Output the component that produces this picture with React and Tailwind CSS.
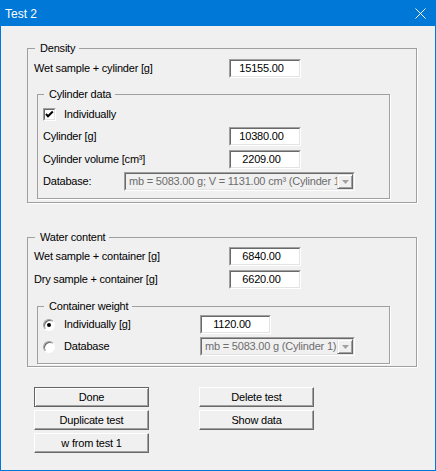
const Field = ({ value, w }) => (
  <div className={`${w} h-[19px] border border-t-[#a0a0a0] border-l-[#a0a0a0] border-b-white border-r-white`}>
    <div className="h-full bg-white border border-t-[#696969] border-l-[#696969] border-b-[#e3e3e3] border-r-[#e3e3e3] flex items-center justify-center pr-[7px]">
      {value}
    </div>
  </div>
);

const Combo = ({ text, w }) => (
  <div className={`${w} h-[19px] border border-t-[#a0a0a0] border-l-[#a0a0a0] border-b-white border-r-white`}>
    <div className="h-full flex bg-[#f0f0f0] border border-t-[#696969] border-l-[#696969] border-b-[#e3e3e3] border-r-[#e3e3e3]">
      <div className="flex-1 min-w-0 overflow-hidden whitespace-nowrap text-[#6d6d6d] pl-[3px] flex items-center">
        {text}
      </div>
      <div className="w-[16px] h-full flex items-center justify-center bg-[#f0f0f0] border border-t-[#e3e3e3] border-l-[#e3e3e3] border-b-[#696969] border-r-[#696969] shadow-[inset_1px_1px_#fff,inset_-1px_-1px_#a0a0a0]">
        <svg width="7" height="4" viewBox="0 0 7 4">
          <path d="M0 0h7L3.5 4z" fill="#a0a0a0" />
        </svg>
      </div>
    </div>
  </div>
);

const Btn = ({ children, def }) => (
  <div
    className={`h-[20px] flex items-center justify-center bg-[#f0f0f0] ${
      def
        ? 'border border-[#646464] shadow-[inset_1px_1px_#fff,inset_-1px_-1px_#a0a0a0]'
        : 'border border-t-white border-l-white border-b-[#696969] border-r-[#696969] shadow-[inset_-1px_-1px_#a0a0a0]'
    }`}
  >
    {children}
  </div>
);

const Legend = ({ children }) => (
  <legend className="ml-px pl-[5px] pr-[4px] leading-[14px]">{children}</legend>
);

const Row = ({ label, children, lw }) => (
  <div className="flex items-center h-[19px]">
    <div className={`${lw} shrink-0`}>{label}</div>
    {children}
  </div>
);

const Check = () => (
  <div className="w-[13px] h-[13px] border border-t-[#a0a0a0] border-l-[#a0a0a0] border-b-white border-r-white">
    <div className="w-full h-full bg-white border border-t-[#696969] border-l-[#696969] border-b-[#e3e3e3] border-r-[#e3e3e3] flex items-center justify-center">
      <svg width="9" height="9" viewBox="0 0 9 9">
        <path d="M1 4l2 2.2L7.8 1.5" stroke="#000" strokeWidth="2" fill="none" />
      </svg>
    </div>
  </div>
);

const Radio = ({ on }) => (
  <div className="w-[12px] h-[12px] rounded-full bg-white border border-t-[#a0a0a0] border-l-[#a0a0a0] border-b-white border-r-white shadow-[inset_1px_1px_#696969] flex items-center justify-center">
    {on && <div className="w-[4px] h-[4px] rounded-full bg-black" />}
  </div>
);

export default function App() {
  return (
    <div className="w-[436px] h-[471px] border border-[#0078d7] bg-[#f0f0f0] flex flex-col font-['Liberation_Sans',Arial,sans-serif] text-[11px] tracking-[-0.2px] text-black">
      <div className="h-[25px] shrink-0 bg-[#0078d7] flex items-center justify-between pl-[4px] pr-[9px]">
        <span className="text-white text-[12px] tracking-normal">Test 2</span>
        <svg width="11" height="11" viewBox="0 0 11 11">
          <path d="M0.5 0.5l10 10M10.5 0.5l-10 10" stroke="#fff" strokeWidth="1" />
        </svg>
      </div>

      <div className="flex-1 px-[26px] pt-[15px]">
        {/* Density */}
        <fieldset className="w-[390px] border border-[#a0a0a0] shadow-[1px_1px_0_#fff] px-[6px] pt-[4px] pb-[3px]">
          <Legend>Density</Legend>
          <Row label="Wet sample + cylinder [g]" lw="w-[195px]">
            <Field value="15155.00" w="w-[72px]" />
          </Row>

          <fieldset className="w-[353px] ml-[3px] mt-[9px] border border-[#a0a0a0] shadow-[1px_1px_0_#fff] pl-[5px] pt-[4px] pb-[7px]">
            <Legend>Cylinder data</Legend>
            <div className="flex items-center h-[19px] gap-[8px]">
              <Check />
              <span>Individually</span>
            </div>
            <div className="mt-[3px]">
              <Row label="Cylinder [g]" lw="w-[186px]">
                <Field value="10380.00" w="w-[72px]" />
              </Row>
            </div>
            <div className="mt-[4px]">
              <Row label="Cylinder volume [cm³]" lw="w-[186px]">
                <Field value="2209.00" w="w-[72px]" />
              </Row>
            </div>
            <div className="mt-[3px]">
              <Row label="Database:" lw="w-[81px]">
                <Combo text="mb = 5083.00 g; V = 1131.00 cm³ (Cylinder 1)" w="w-[231px]" />
              </Row>
            </div>
          </fieldset>
        </fieldset>

        {/* Water content */}
        <fieldset className="w-[390px] mt-[27px] border border-[#a0a0a0] shadow-[1px_1px_0_#fff] px-[6px] pt-[3px] pb-[2px]">
          <Legend>Water content</Legend>
          <Row label="Wet sample + container [g]" lw="w-[195px]">
            <Field value="6840.00" w="w-[72px]" />
          </Row>
          <div className="mt-[4px]">
            <Row label="Dry sample + container [g]" lw="w-[195px]">
              <Field value="6620.00" w="w-[72px]" />
            </Row>
          </div>

          <fieldset className="w-[353px] ml-[3px] mt-[10px] border border-[#a0a0a0] shadow-[1px_1px_0_#fff] pl-[5px] pt-[2px] pb-[7px]">
            <Legend>Container weight</Legend>
            <div className="flex items-center h-[19px]">
              <div className="w-[157px] shrink-0 flex items-center gap-[8px]">
                <Radio on />
                <span className="pl-px">Individually [g]</span>
              </div>
              <Field value="1120.00" w="w-[71px]" />
            </div>
            <div className="flex items-center h-[19px] mt-[3px]">
              <div className="w-[157px] shrink-0 flex items-center gap-[8px]">
                <Radio />
                <span className="pl-px">Database</span>
              </div>
              <Combo text="mb = 5083.00 g (Cylinder 1)" w="w-[155px]" />
            </div>
          </fieldset>
        </fieldset>

        {/* Buttons */}
        <div className="mt-[20px] ml-[7px] grid grid-cols-[115px_115px] gap-x-[50px] gap-y-[3px]">
          <Btn def>Done</Btn>
          <Btn>Delete test</Btn>
          <Btn>Duplicate test</Btn>
          <Btn>Show data</Btn>
          <Btn>w from test 1</Btn>
        </div>
      </div>
    </div>
  );
}
